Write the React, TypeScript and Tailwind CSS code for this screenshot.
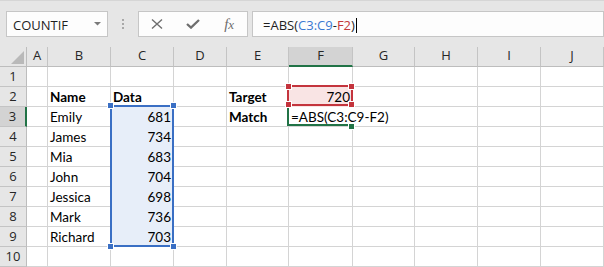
import React from "react";

const COLS = ["A", "B", "C", "D", "E", "F", "G", "H", "I", "J"];

type CellDef = { text?: React.ReactNode; bold?: boolean; right?: boolean };

const data: Record<string, CellDef> = {
  B2: { text: "Name", bold: true },
  C2: { text: "Data", bold: true },
  E2: { text: "Target", bold: true },
  F2: { text: "720", right: true },
  B3: { text: "Emily" },
  C3: { text: "681", right: true },
  E3: { text: "Match", bold: true },
  F3: { text: "=ABS(C3:C9-F2)" },
  B4: { text: "James" },
  C4: { text: "734", right: true },
  B5: { text: "Mia" },
  C5: { text: "683", right: true },
  B6: { text: "John" },
  C6: { text: "704", right: true },
  B7: { text: "Jessica" },
  C7: { text: "698", right: true },
  B8: { text: "Mark" },
  C8: { text: "736", right: true },
  B9: { text: "Richard" },
  C9: { text: "703", right: true },
};

function Handle({ className, color }: { className: string; color: string }) {
  return (
    <div
      className={`absolute w-[7px] h-[7px] border border-white ${color} ${className}`}
    />
  );
}

export default function App() {
  const rows = Array.from({ length: 10 }, (_, i) => i + 1);
  return (
    <div className="w-[604px] h-[267px] bg-white overflow-hidden relative">
      {/* Formula bar */}
      <div className="h-[47px] box-border bg-[#e6e6e6] border-t border-[#d6d6d6] flex items-start pt-[10px] font-['Open_Sans',sans-serif] text-[13px]">
        <div className="ml-[6px] w-[102px] h-[26px] box-border border border-[#c6c6c6] bg-[#fdfdfd] flex items-center relative">
          <span className="pl-[6px] leading-[24px] text-[#1f1f1f] pt-[1px]">COUNTIF</span>
          <svg className="absolute left-[87px] top-[10px]" width="7" height="4" viewBox="0 0 7 4">
            <path d="M0 0 L7 0 L3.5 3.5 Z" fill="#7a7a7a" />
          </svg>
        </div>
        <div className="w-[30px] h-[26px] flex flex-col items-center justify-center gap-[2px]">
          <div className="w-[2px] h-[2px] bg-[#a8a8a8]" />
          <div className="w-[2px] h-[2px] bg-[#a8a8a8]" />
          <div className="w-[2px] h-[2px] bg-[#a8a8a8]" />
        </div>
        <div className="w-[110px] h-[26px] box-border border border-[#c6c6c6] bg-[#fdfdfd] flex items-center">
          <div className="w-[37px] flex justify-center">
            <svg width="12" height="12" viewBox="0 0 12 12">
              <path d="M1 1.5 L11 10.5 M11 1.5 L1 10.5" stroke="#6e6e6e" strokeWidth="1.4" fill="none" />
            </svg>
          </div>
          <div className="w-[36px] flex justify-center">
            <svg width="14" height="10" viewBox="0 0 14 10">
              <path d="M1 5 L5 8.6 L13 1" stroke="#6e6e6e" strokeWidth="2.3" fill="none" />
            </svg>
          </div>
          <div className="w-[36px] flex justify-center">
            <span className="font-['Liberation_Serif',serif] italic text-[#6e6e6e] text-[15px] leading-[20px]">
              f<span className="text-[13px]">x</span>
            </span>
          </div>
        </div>
        <div className="ml-[4px] w-[352px] h-[26px] box-border border border-[#c6c6c6] bg-[#fdfdfd] flex items-center">
          <span className="pl-[10px] leading-[24px] text-[#1f1f1f] pt-[1px] whitespace-nowrap">
            =ABS(<span className="text-[#3a78d2]">C3:C9</span>-<span className="text-[#c4393b]">F2</span>)
          </span>
          <div className="w-[1px] h-[15px] bg-black ml-[1px] mt-[2px]" />
        </div>
      </div>

      {/* Grid */}
      <div className="relative">
        <div className="grid grid-cols-[27px_21px_63px_63px_53px_62px_64px_62px_63px_63px_63px] auto-rows-[20px]">
          {/* header row */}
          <div className="box-border border-r border-b border-[#bdbdbd] bg-[#e6e6e6] relative">
            <svg className="absolute left-[11px] top-[4px]" width="13" height="13" viewBox="0 0 13 13">
              <path d="M13 0 L13 13 L0 13 Z" fill="#b9b9b9" />
            </svg>
          </div>
          {COLS.map((c) => (
            <div
              key={c}
              className={`box-border border-r border-[#c4c4c4] flex justify-center font-['Open_Sans',sans-serif] text-[13px] leading-[17px] text-[#262626] ${
                c === "F"
                  ? "bg-[#d3d3d3] border-b-2 border-b-[#217346]"
                  : "bg-[#e6e6e6] border-b border-b-[#bdbdbd]"
              }`}
            >
              {c}
            </div>
          ))}
          {rows.map((r) => (
            <React.Fragment key={r}>
              <div
                className={`box-border border-b border-[#c4c4c4] flex justify-center font-['Open_Sans',sans-serif] text-[13px] leading-[18px] text-[#262626] ${
                  r === 3
                    ? "bg-[#d3d3d3] border-r-2 border-r-[#217346]"
                    : "bg-[#e6e6e6] border-r border-r-[#bdbdbd]"
                }`}
              >
                {r}
              </div>
              {COLS.map((c) => {
                const key = `${c}${r}`;
                const d = data[key];
                const inBlue = c === "C" && r >= 3 && r <= 9;
                const inRed = key === "F2";
                let bg = "bg-white border-[#d4d4d4]";
                if (inBlue) bg = "bg-[#e7eef9] border-[#e7eef9]";
                if (inRed) bg = "bg-[#f9e4e4] border-[#f9e4e4]";
                if (key === "F3") bg = "bg-white border-b-[#d4d4d4] border-r-white";
                return (
                  <div
                    key={key}
                    className={`box-border border-r border-b ${bg} flex font-['Lato',sans-serif] text-[13.5px] leading-[20px] text-black whitespace-nowrap overflow-visible ${
                      d?.right ? "justify-end pr-[2px]" : "pl-[2px]"
                    } ${d?.bold ? "font-bold" : ""} ${key === "F3" ? "relative z-10" : ""}`}
                  >
                    {d?.text}
                  </div>
                );
              })}
            </React.Fragment>
          ))}
        </div>

        {/* Blue range C3:C9 */}
        <div className="absolute left-[110px] top-[58px] w-[64px] h-[142px] border-2 border-[#3a6fc4] z-20" />
        <Handle color="bg-[#3a6fc4]" className="left-[107px] top-[55px] z-30" />
        <Handle color="bg-[#3a6fc4]" className="left-[170px] top-[55px] z-30" />
        <Handle color="bg-[#3a6fc4]" className="left-[107px] top-[196px] z-30" />
        <Handle color="bg-[#3a6fc4]" className="left-[170px] top-[196px] z-30" />

        {/* Red range F2 */}
        <div className="absolute left-[287px] top-[38px] w-[66px] h-[21px] border-2 border-[#c4343d] z-20" />
        <Handle color="bg-[#c4343d]" className="left-[285px] top-[36px] z-30" />
        <Handle color="bg-[#c4343d]" className="left-[348px] top-[36px] z-30" />
        <Handle color="bg-[#c4343d]" className="left-[285px] top-[54px] z-30" />
        <Handle color="bg-[#c4343d]" className="left-[348px] top-[54px] z-30" />

        {/* Active cell F3 */}
        <div className="absolute left-[287px] top-[59px] w-[63px] h-[20px] border-l-2 border-b-2 border-[#217346] z-20" />
        <Handle color="bg-[#217346]" className="left-[348px] top-[76px] z-30" />
      </div>
    </div>
  );
}
